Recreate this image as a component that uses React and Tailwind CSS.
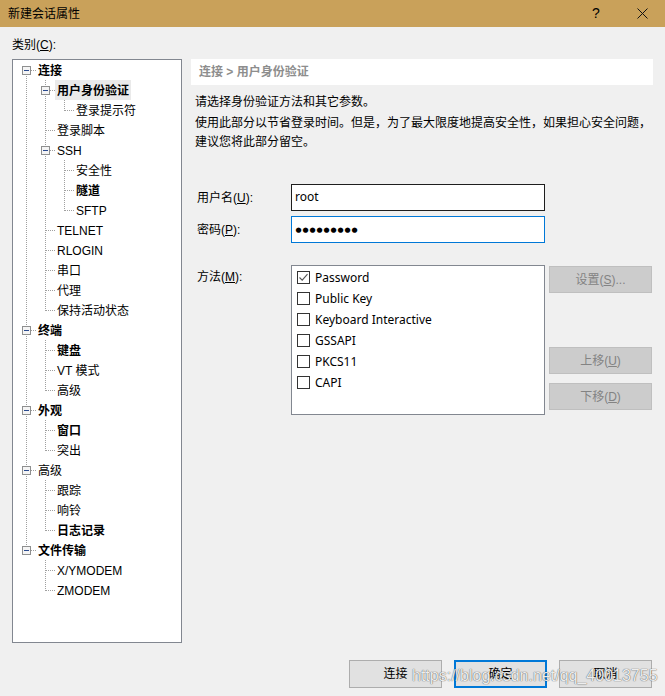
import React from "react";

const FONT = { fontFamily: '"Liberation Sans","Noto Sans CJK SC",sans-serif' };
const UIFONT = { fontFamily: '"Noto Sans","Noto Sans CJK SC",sans-serif' };

const rows = [
  ["连接", 0, true, true],
  ["用户身份验证", 1, true, true, true],
  ["登录提示符", 2],
  ["登录脚本", 1],
  ["SSH", 1, false, true],
  ["安全性", 2],
  ["隧道", 2, true],
  ["SFTP", 2],
  ["TELNET", 1],
  ["RLOGIN", 1],
  ["串口", 1],
  ["代理", 1],
  ["保持活动状态", 1],
  ["终端", 0, true, true],
  ["键盘", 1, true],
  ["VT 模式", 1],
  ["高级", 1],
  ["外观", 0, true, true],
  ["窗口", 1, true],
  ["突出", 1],
  ["高级", 0, false, true],
  ["跟踪", 1],
  ["响铃", 1],
  ["日志记录", 1, true],
  ["文件传输", 0, true, true],
  ["X/YMODEM", 1],
  ["ZMODEM", 1],
];

function hasNext(i) {
  const L = rows[i][1];
  for (let j = i + 1; j < rows.length; j++) {
    if (rows[j][1] < L) return false;
    if (rows[j][1] === L) return true;
  }
  return false;
}

function ancestor(i, depth) {
  for (let j = i - 1; j >= 0; j--) if (rows[j][1] === depth) return j;
  return -1;
}

const DOT = "#a0a0a0";

function Cell({ kind, next, first, expander }) {
  return (
    <svg width="19" height="20" className="shrink-0 block">
      {kind === "pass" && (
        <line x1="9.5" y1="0" x2="9.5" y2="20" stroke={DOT} strokeDasharray="1 1" />
      )}
      {kind === "self" && (
        <>
          <line
            x1="9.5"
            y1={first ? 10 : 0}
            x2="9.5"
            y2={next ? 20 : 11}
            stroke={DOT}
            strokeDasharray="1 1"
          />
          <line x1={expander ? 14 : 10} y1="10.5" x2="19" y2="10.5" stroke={DOT} strokeDasharray="1 1" />
          {expander && (
            <>
              <rect x="5.5" y="6.5" width="8" height="8" fill="#f4f4f4" stroke="#8e8f8f" />
              <line x1="7" y1="10.5" x2="12" y2="10.5" stroke="#2a4a8f" />
            </>
          )}
        </>
      )}
    </svg>
  );
}

function Tree() {
  return (
    <div className="w-[170px] h-[584px] bg-white border border-[#828790] pl-[4px] flex flex-col">
      {rows.map((r, i) => {
        const [label, L, bold, exp, sel] = r;
        const cells = [];
        for (let c = 0; c < L; c++) {
          const a = ancestor(i, c);
          cells.push(<Cell key={c} kind={a >= 0 && hasNext(a) ? "pass" : "blank"} />);
        }
        cells.push(<Cell key="s" kind="self" next={hasNext(i)} first={i === 0} expander={exp} />);
        return (
          <div key={i} className="flex items-center h-[20px]">
            {cells}
            <span
              className={
                "px-[2px] h-[20px] pt-[1px] leading-[20px] text-[12px] text-black whitespace-nowrap " +
                (bold ? "font-bold " : "") +
                (sel ? "bg-[#eaeaea]" : "")
              }
            >
              {label}
            </span>
          </div>
        );
      })}
    </div>
  );
}

function Check({ checked }) {
  return (
    <div className="w-[13px] h-[13px] border border-[#333333] bg-white flex items-center justify-center shrink-0">
      {checked && (
        <svg width="11" height="11" viewBox="0 0 11 11">
          <path d="M1.5 5.5 L4.2 8.2 L9.5 2.2" fill="none" stroke="#555555" strokeWidth="1.1" />
        </svg>
      )}
    </div>
  );
}

function DisabledBtn({ children, className = "" }) {
  return (
    <div
      className={
        "w-[103px] h-[27px] bg-[#cccccc] border border-[#bfbfbf] flex items-center justify-center text-[12px] text-[#838383] " +
        className
      }
    >
      {children}
    </div>
  );
}

export default function App() {
  const methods = ["Password", "Public Key", "Keyboard Interactive", "GSSAPI", "PKCS11", "CAPI"];
  return (
    <div className="relative w-[665px] h-[696px] bg-[#f0f0f0] overflow-hidden flex flex-col" style={FONT}>
      {/* title bar */}
      <div className="h-[27px] bg-[#c9a15a] flex items-center pl-[8px] shrink-0">
        <span className="text-[12px] text-black">新建会话属性</span>
        <div className="ml-auto flex h-full">
          <div className="w-[46px] h-full flex items-center justify-center text-[14px] text-black">?</div>
          <div className="w-[46px] h-full flex items-center justify-center">
            <svg width="11" height="11" viewBox="0 0 11 11">
              <path d="M0.5 0.5 L10.5 10.5 M10.5 0.5 L0.5 10.5" stroke="#111" strokeWidth="1" />
            </svg>
          </div>
        </div>
      </div>

      {/* body */}
      <div className="flex pl-[12px] pt-[10px]">
        <div className="flex flex-col w-[170px]">
          <div className="h-[16px] leading-[16px] text-[12px] text-black mb-[6px]">
            类别(<span className="underline">C</span>):
          </div>
          <Tree />
        </div>

        <div className="ml-[9px] w-[462px] pt-[22px] flex flex-col">
          <div className="h-[26px] bg-white pl-[8px] flex items-center text-[12px] font-bold text-[#8d8d8d]">
            连接 &gt; 用户身份验证
          </div>
          <div className="mt-[9px] pl-[4px] text-[12px] leading-[16px] text-black">请选择身份验证方法和其它参数。</div>
          <div className="mt-[4px] pl-[4px] text-[12px] leading-[19px] text-black whitespace-nowrap">
            使用此部分以节省登录时间。但是，为了最大限度地提高安全性，如果担心安全问题，
            <br />
            建议您将此部分留空。
          </div>

          <div className="mt-[32px] flex items-center">
            <div className="w-[100px] pl-[6px] text-[12px] text-black">
              用户名(<span className="underline">U</span>):
            </div>
            <div className="w-[254px] h-[27px] bg-white border border-[#1e1e1e] flex items-center pl-[3px] pb-[2px] text-[12px] text-black" style={UIFONT}>
              root
            </div>
          </div>
          <div className="mt-[5px] flex items-center">
            <div className="w-[100px] pl-[6px] text-[12px] text-black">
              密码(<span className="underline">P</span>):
            </div>
            <div className="w-[254px] h-[27px] bg-white border border-[#0078d7] flex items-center pl-[3px] text-black">
              {Array.from({ length: 9 }).map((_, k) => (
                <span key={k} className="inline-block w-[7px] text-center text-[7px] leading-[10px]" style={{ fontFamily: '"DejaVu Sans",sans-serif' }}>
                  ●
                </span>
              ))}
            </div>
          </div>

          <div className="mt-[22px] flex items-start">
            <div className="w-[100px] pl-[6px] pt-[4px] text-[12px] leading-[16px] text-black">
              方法(<span className="underline">M</span>):
            </div>
            <div className="w-[254px] h-[150px] bg-white border border-[#828790] pt-[1px] flex flex-col">
              {methods.map((m, k) => (
                <div key={m} className="h-[21px] flex items-center pl-[5px]">
                  <Check checked={k === 0} />
                  <span className="ml-[5px] text-[12px] text-black" style={UIFONT}>
                    {m}
                  </span>
                </div>
              ))}
            </div>
            <div className="ml-[4px] flex flex-col">
              <DisabledBtn className="mt-[1px]">
                设置(<span className="underline">S</span>)...
              </DisabledBtn>
              <DisabledBtn className="mt-[54px]">
                上移(<span className="underline">U</span>)
              </DisabledBtn>
              <DisabledBtn className="mt-[9px]">
                下移(<span className="underline">D</span>)
              </DisabledBtn>
            </div>
          </div>
        </div>
      </div>

      {/* bottom buttons */}
      <div className="mt-[17px] flex justify-end pr-[13px] gap-[12px]">
        <div className="w-[93px] h-[28px] bg-[#e1e1e1] border border-[#adadad] flex items-center justify-center text-[12px] text-black">连接</div>
        <div className="w-[93px] h-[28px] bg-[#e1e1e1] border-2 border-[#0078d7] flex items-center justify-center text-[12px] text-black">确定</div>
        <div className="w-[93px] h-[28px] bg-[#e1e1e1] border border-[#adadad] flex items-center justify-center text-[12px] text-black">取消</div>
      </div>

      {/* watermark */}
      <div
        className="absolute left-[412px] top-[668px] text-[16px] leading-[16px] text-white/90 whitespace-nowrap pointer-events-none [text-shadow:0_0_1px_rgba(0,0,0,0.6),0_0_1px_rgba(0,0,0,0.4)]"
        style={{ fontFamily: '"Liberation Sans",sans-serif' }}
      >
        https://blog.csdn.net/qq_40013755
      </div>
    </div>
  );
}
